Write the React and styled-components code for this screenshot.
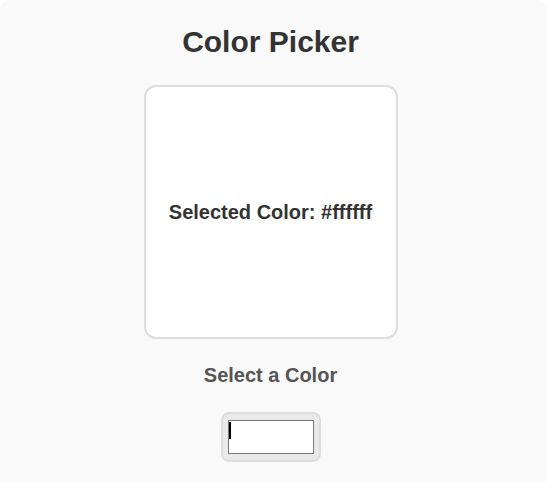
import React, { useState } from "react";
import styled, { createGlobalStyle } from "styled-components";

const GlobalStyle = createGlobalStyle`
  html, body {
    margin: 0;
    padding: 0;
    background: #ffffff;
  }
  body {
    font-family: "Liberation Sans", Arial, sans-serif;
  }
`;

const Wrapper = styled.div`
  display: flex;
  flex-direction: column;
  align-items: center;
  min-height: 520px;
  padding: 25px 25px 20px 19px;
  box-sizing: border-box;
  background: #f9f9f9;
  border-radius: 10px;
`;

const Title = styled.h1`
  margin: 0 0 26px;
  font-size: 30px;
  font-weight: 700;
  color: #333;
`;

const Preview = styled.div`
  width: 250px;
  height: 250px;
  display: flex;
  align-items: center;
  justify-content: center;
  background: ${(props) => props.color};
  border: 2px solid #ddd;
  border-radius: 12px;
  margin-bottom: 25px;
`;

const PreviewText = styled.p`
  margin: 0;
  font-size: 20px;
  font-weight: 700;
  color: #333;
`;

const Label = styled.label`
  font-size: 20px;
  font-weight: 700;
  color: #555;
  margin-bottom: 25px;
`;

const ColorInput = styled.input`
  width: 100px;
  height: 50px;
  padding: 2px 3px;
  box-sizing: border-box;
  border: 2px solid #ddd;
  border-radius: 8px;
  background: #e9e9e9;
  cursor: pointer;

  &::-webkit-color-swatch {
    border: 1px solid #777;
    background-image: linear-gradient(#000, #000);
    background-size: 2px 17px;
    background-repeat: no-repeat;
    background-position: 0 1px;
  }
`;

const App = () => {
  const [color, setColor] = useState("#ffffff");

  return (
    <>
      <GlobalStyle />
      <Wrapper>
        <Title>Color Picker</Title>
        <Preview color={color}>
          <PreviewText>Selected Color: {color}</PreviewText>
        </Preview>
        <Label htmlFor="color-input">Select a Color</Label>
        <ColorInput
          id="color-input"
          type="color"
          value={color}
          onChange={(e) => setColor(e.target.value)}
        />
      </Wrapper>
    </>
  );
};

export default App;
